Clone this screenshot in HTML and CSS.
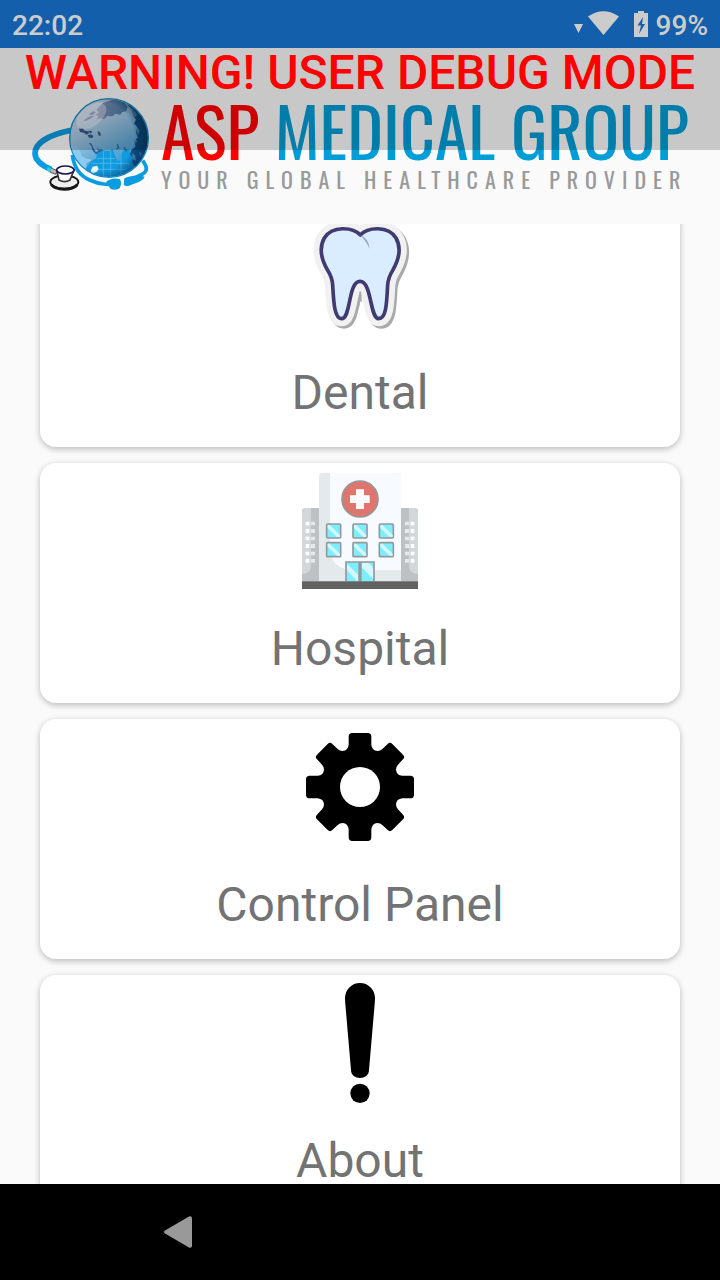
FILE: index.html
```html
<!DOCTYPE html>
<html lang="en">
<head>
<meta charset="utf-8">
<meta name="viewport" content="width=device-width, initial-scale=1">
<title>ASP Medical Group</title>
<link rel="stylesheet" href="styles.css">
</head>
<body>
<div class="status-bar">
  <span class="clock">22:02</span>
  <div class="status-icons">
    <svg class="signal" viewBox="0 0 46 28" aria-hidden="true"><path d="M0 14h9l-4.500 9zM14 6.500Q29.500-4 45 6.500L29.500 25z"/></svg>
    <svg class="battery" viewBox="0 0 14 26" aria-hidden="true"><path fill-rule="evenodd" d="M4 0h6v2h4v24H0V2h4zM9 6L3.500 14.500H7L5 23l6-10H8z"/></svg>
    <span>99%</span>
  </div>
</div>

<header class="app-header">
  <div class="logo">
    <svg class="logo-mark" viewBox="30 15 375 288" aria-hidden="true">
      <defs>
        <linearGradient id="land" x1=".1" y1="0" x2=".65" y2="1">
          <stop offset="0" stop-color="#d6d9ee"/><stop offset=".35" stop-color="#aac9e4"/><stop offset=".65" stop-color="#6bacd6"/><stop offset="1" stop-color="#2f8fc9"/>
        </linearGradient>
        <linearGradient id="arctic" x1="0" y1="0" x2="1" y2=".2">
          <stop offset="0" stop-color="#8c93b8"/><stop offset="1" stop-color="#4a7ba8"/>
        </linearGradient>
        <radialGradient id="shade" cx="38%" cy="48%" r="62%">
          <stop offset=".7" stop-color="#06335f" stop-opacity="0"/><stop offset="1" stop-color="#06335f" stop-opacity=".75"/>
        </radialGradient>
        <clipPath id="disc"><circle cx="267" cy="144" r="116"/></clipPath>
      </defs>
      <path d="M153 121C96 133 45 155 45 190c0 21 18 36 49 49" fill="none" stroke="#0a9ce0" stroke-width="17"/>
      <path d="M157 195c5 39 24 63 52 75 29 14 66 16 86 12M368 212c14 20 15 32 0 40l-22 11" fill="none" stroke="#0a9ce0" stroke-width="11"/>
      <path d="M258 276c11-9 25-13 42-8 5 9 4 17-1 27-6 5-18 5-27 2zM313 265c22-9 42-11 61-5-7 15-23 17-40 24-9 6-19 5-23 0z" fill="#0a9ce0"/>
      <circle cx="267" cy="144" r="118" fill="url(#land)" stroke="#168bc2" stroke-width="4"/>
      <g clip-path="url(#disc)">
        <path d="M236 52l14-14 32-10 30 8 11 14-4 14-12 2-6 8-14-3-10 8-16-1-8 9-14-2-10 4 6-10-8-6 10-5-7-8z" fill="url(#arctic)"/>
        <path d="M190 92l16-12 18-4-10 9-15 7zM206 74l12-10 10 2-10 9z" fill="#777fa8"/>
        <path d="M177 116l12-1 5 7 10 2 4 6-8 4-9-6-11-2zM203 136l10-3 7 5-3 6-10-1zM204 123l10-1 3 5-6 3zM233 124l7 2 3 10-5 3-4-7z" fill="#3d5687"/>
        <path d="M206 159l8 9 4 14 10 11 15-3 8-7-5-5-9 1-7-8 5 12-7 3-9-14-5-12z" fill="#2c679b"/>
        <path d="M150 150l10 18 18 10 8 20 12 8 14 2 2 4-14 6-2 16 6 22-26-8-30-40z" fill="#8bcbf2"/>
        <path d="M213 214l15-9 4-16 16-7 20 1 10-6 6 18 7 18 9-2 2-20 12-12 12-3 6 16 8 2 2 22-10 22-20 22-40 12-44-2-28-12-6-18z" fill="#119bde"/>
        <path d="M230 206h54M213 220h116M216 238h106M250 184v74M272 182v84M303 180v80" stroke="#5cc3ef" stroke-width="2" fill="none"/>
        <path d="M213 240l5-10 13-3 5 9-6 10-12 4-6-4z" fill="#e6f8ff"/>
        <path d="M318 38l12 14 14 14-4 10 8 14-6 10 10 12-4 16 6 14-10 10 2 18-12 10-4 14 10 8-4 16 12 12 30-20 24-50-8-60-32-46z" fill="#0d4f86"/>
        <path d="M334 52l18 22-6 8-10-12zM350 112l9 8-4 14-5-8zM344 146l7 6-4 9zM336 190l9 6 3 16-9-4zM358 186l8 3-5 12z" fill="#5594be"/>
        <path d="M292 163l4 10-6 4M312 172l8 12" stroke="#2c679b" stroke-width="4" fill="none"/>
        <circle cx="267" cy="144" r="118" fill="url(#shade)"/>
        <ellipse cx="214" cy="78" rx="52" ry="30" transform="rotate(-38 214 78)" fill="#fff" opacity=".35"/>
      </g>
      <ellipse cx="133" cy="276" rx="42" ry="20" fill="#eee" stroke="#171717" stroke-width="6"/>
      <path d="M94 284c14 18 62 18 78 0" fill="none" stroke="#171717" stroke-width="9"/>
      <path d="M92 234l19 8-4 11-18-7z" fill="#bbb" stroke="#555" stroke-width="3"/>
      <path d="M83 231l11 4-4 11-10-5z" fill="#1ed7e5"/>
      <path d="M110 241l7 29q17 10 33 0l12-30z" fill="#fafafa" stroke="#333" stroke-width="5"/>
      <ellipse cx="136" cy="240" rx="26" ry="12" fill="#fff" stroke="#17164f" stroke-width="5"/>
    </svg>
    <div class="logo-text">
      <div class="logo-name"><span class="logo-asp">ASP</span> MEDICAL GROUP</div>
      <div class="logo-tagline">YOUR GLOBAL HEALTHCARE PROVIDER</div>
    </div>
  </div>
  <div class="debug-banner">WARNING! USER DEBUG MODE</div>
</header>

<main class="menu">
  <div class="menu-list">
    <button class="card" type="button">
      <svg class="card-icon" viewBox="0 0 360 360" aria-hidden="true">
        <defs><path id="tooth" d="M181 60C159 36 96 31 73 69c-18 32-8 66 10 97 12 19 14 28 15 44 3 47 4 101 27 101 28 0 19-112 55-112s29 112 56 112c24 0 24-52 27-101 1-16 4-26 15-44 18-31 28-65 10-97-23-38-85-33-107-9z"/></defs>
        <g stroke-linejoin="round">
          <use href="#tooth" x="7" y="7" fill="#aaa" stroke="#aaa" stroke-width="46"/>
          <use href="#tooth" fill="#f1f1f1" stroke="#f1f1f1" stroke-width="46"/>
          <path d="M181 232q-2 48-20 79M181 232l2 26" fill="none" stroke="#aaa" stroke-width="5" stroke-linecap="round"/>
          <use href="#tooth" fill="#d9edff" stroke="#413a70" stroke-width="11"/>
        </g>
        <path d="M180 60q26 9 29 42-11-25-29-42z" fill="#9da3c3"/>
      </svg>
      <span>Dental</span>
    </button>
    <button class="card" type="button">
      <svg class="card-icon" viewBox="30 33 360 360" aria-hidden="true">
        <path d="M36 154q0-10 10-10h41v220H36z" fill="#bdc1c4"/><path d="M36 154q0-10 10-10h17v172q0 26-27 26z" fill="#d4d7da"/>
        <path d="M333 144h41q10 0 10 10v210h-51z" fill="#bdc1c4"/><path d="M357 144h17q10 0 10 10v188q-27 0-27-26z" fill="#d4d7da"/>
        <path d="M87 49q0-10 10-10h226q10 0 10 10v315H87z" fill="#e4e9ec"/>
        <path d="M120 39h203q10 0 10 10v282H193q-73-2-73-70z" fill="#f7fbff"/>
        <g fill="#fff"><path id="panes" d="M47 185h11v11H47zM47 207h11v12H47zM47 230h11v11H47zM47 252h11v12H47zM47 297h11v11H47zM47 275h11v11H47z"/><use href="#panes" x="315"/></g>
        <g fill="#e4e9ec"><path id="side-panes" d="M63 185h12v11H63zM63 207h12v12H63zM63 230h12v11H63zM63 252h12v12H63zM63 275h12v11H63zM63 297h12v11H63z"/><use href="#side-panes" x="282"/></g>
        <circle cx="210" cy="117" r="54" fill="#e0756d" stroke="#92979b" stroke-width="5"/>
        <path d="M198 88h24v18h17v23h-17v18h-24v-18h-18v-23h18z" fill="#fff"/>
        <g id="windows">
          <g id="window"><rect x="110" y="192" width="42" height="42" rx="3" fill="#7ceeff" stroke="#94999c" stroke-width="5"/><path d="M113 195h6l31 30v6h-9l-28-27z" fill="#d3f8ff"/></g>
          <use href="#window" x="79"/><use href="#window" x="158"/>
        </g>
        <use href="#windows" y="56"/>
        <path d="M168 364v-58h84v58" fill="#7ceeff" stroke="#94999c" stroke-width="5"/>
        <path d="M171 311l34 34v18h-4l-30-32zM215 309h21l13 13v34l-34-34z" fill="#d3f8ff"/><path d="M210 306v58" stroke="#94999c" stroke-width="10"/>
        <path d="M36 364h348v23H36z" fill="#616161"/>
      </svg>
      <span>Hospital</span>
    </button>
    <button class="card" type="button">
      <svg class="card-icon" viewBox="30 21 360 360" aria-hidden="true">
        <path id="gear-quarter" d="M210 39H233Q244 39 244 50V74Q246 92 262 93 271 93 277 87L293 72Q300 65 307 72L339 104Q346 111 339 118L324 134Q318 140 318 149 319 165 337 167H361Q372 167 372 178V201H210z"/>
        <use href="#gear-quarter" transform="rotate(90 210 201)"/>
        <use href="#gear-quarter" transform="rotate(180 210 201)"/>
        <use href="#gear-quarter" transform="rotate(270 210 201)"/>
        <circle cx="210" cy="201" r="60" fill="#fff"/>
      </svg>
      <span>Control Panel</span>
    </button>
    <button class="card" type="button">
      <svg class="card-icon" viewBox="-60 39 360 360" aria-hidden="true"><path d="M75 84a45 45 0 0 1 90 0q0 10-2 30l-16 186c0 32-54 32-54 0L77 114q-2-20-2-30z"/><circle cx="120" cy="370" r="29"/></svg>
      <span>About</span>
    </button>
  </div>
</main>

<nav class="nav-bar">
  <button class="back" type="button" aria-label="Back"><svg viewBox="0 0 28 32" aria-hidden="true"><path d="M1 14.500L25 .5q3-1 3 2v27q0 3-3 2L1 17.500q-2-1.500 0-3z"/></svg></button>
</nav>
</body>
</html>
```
FILE: styles.css
```css
* { box-sizing: border-box; }

body {
  margin: 0;
  height: 100vh;
  display: flex;
  flex-direction: column;
  overflow: hidden;
  background: #fafafa;
  font-family: Roboto, "Liberation Sans", sans-serif;
}

.status-bar {
  flex: none;
  display: flex;
  align-items: center;
  justify-content: space-between;
  height: 48px;
  padding: 2px 12px 0;
  background: #145fab;
  color: #ccc;
  font-size: 28px;
  font-weight: 500;
}
.status-icons { display: flex; align-items: center; gap: 8px; }
.status-icons svg { fill: #ccc; }
.signal { width: 46px; height: 28px; margin-bottom: 2px; }
.battery { width: 14px; height: 26px; margin: 0 0 2px 6px; }

.app-header {
  flex: none;
  position: relative;
  height: 176px;
  padding: 47px 30px 0;
}
.debug-banner {
  position: absolute;
  top: 0;
  left: 0;
  right: 0;
  height: 102px;
  background: rgba(0, 0, 0, 0.2);
  color: #f00;
  font-size: 48px;
  font-weight: 500;
  line-height: 50px;
  text-align: center;
  white-space: nowrap;
}
.logo { display: flex; gap: 6px; }
.logo-mark { flex: none; width: 125px; height: 96px; }
.logo-text { white-space: nowrap; }
.logo-name {
  color: #009dd6;
  font-family: Oswald, "Roboto Condensed", "Liberation Sans Narrow", "Liberation Sans", sans-serif;
  font-size: 68px;
  font-weight: 400;
  line-height: 70px;
}
.logo-asp { color: #f00; }
.logo-tagline {
  color: #999;
  font-family: Oswald, "Roboto Condensed", "Liberation Sans Narrow", "Liberation Sans", sans-serif;
  font-size: 22px;
  font-weight: 400;
  line-height: 28px;
  letter-spacing: 7px;
}

.menu { flex: 1; min-height: 0; overflow: hidden; }
.menu-list {
  display: flex;
  flex-direction: column;
  gap: 16px;
  margin-top: -17px;
  padding: 0 40px;
}
.card {
  display: flex;
  flex-direction: column;
  align-items: center;
  gap: 30px;
  padding: 8px 8px 26px;
  border: 0;
  border-radius: 16px;
  background: #fff;
  box-shadow: 0 2px 6px rgba(0, 0, 0, 0.26);
  color: #737373;
  font-family: inherit;
  font-size: 48px;
  line-height: 56px;
}
.card-icon { width: 120px; height: 120px; }

.nav-bar {
  flex: none;
  display: flex;
  align-items: center;
  height: 96px;
  padding-left: 164px;
  background: #000;
}
.back { padding: 0; border: 0; background: none; }
.back svg { display: block; width: 28px; height: 32px; fill: #999; }
```
